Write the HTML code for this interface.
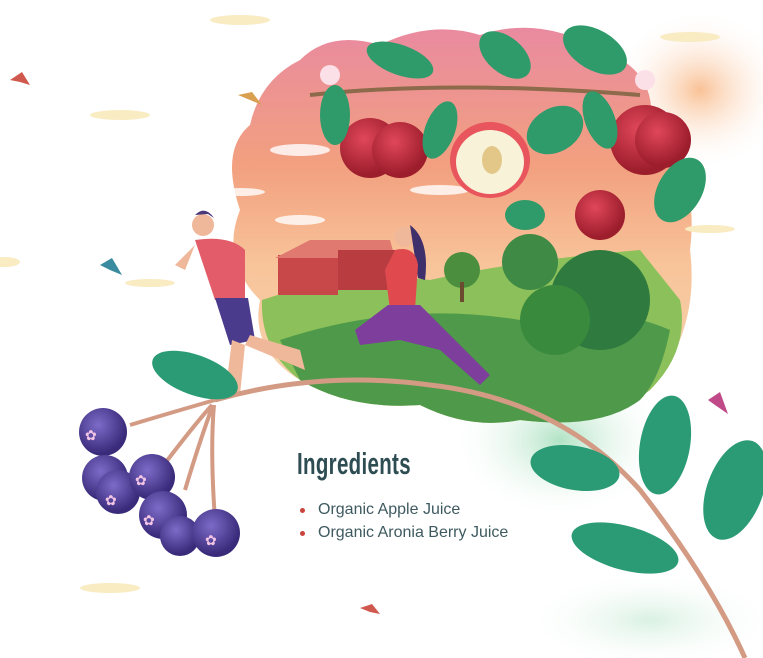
<!DOCTYPE html>
<html><head><style>
body{margin:0;width:763px;height:658px;overflow:hidden;background:#fff;font-family:"Liberation Sans",sans-serif;position:relative}
svg{position:absolute;left:0;top:0}
h2{position:absolute;left:297px;top:446px;margin:0;font-weight:bold;font-size:31px;color:#2e4d53;transform:scaleX(0.66);transform-origin:left top;letter-spacing:0.5px}
ul{position:absolute;left:300px;top:501px;margin:0;padding:0;list-style:none;font-size:16px;color:#3e5a60}
li{margin-bottom:5px;padding-left:18px;position:relative}
li:before{content:"";position:absolute;left:0;top:7px;width:5px;height:5px;border-radius:50%;background:#c9443c}
</style></head><body>
<svg width="763" height="658" viewBox="0 0 763 658">
<defs>
<linearGradient id="sky" x1="0" y1="0" x2="0" y2="1">
<stop offset="0" stop-color="#e98aa0"/><stop offset="0.35" stop-color="#f2a07f"/><stop offset="0.6" stop-color="#f8c49a"/><stop offset="1" stop-color="#f4d7b0"/></linearGradient>
<radialGradient id="glow" cx="0.5" cy="0.5" r="0.5"><stop offset="0" stop-color="#f8b27c" stop-opacity="0.8"/><stop offset="1" stop-color="#fff" stop-opacity="0"/></radialGradient>
<radialGradient id="gglow" cx="0.5" cy="0.5" r="0.5"><stop offset="0" stop-color="#9fdcb7" stop-opacity="0.8"/><stop offset="1" stop-color="#fff" stop-opacity="0"/></radialGradient>
<radialGradient id="berry" cx="0.4" cy="0.35" r="0.6"><stop offset="0" stop-color="#7d6cc8"/><stop offset="1" stop-color="#3a2a7a"/></radialGradient>
<radialGradient id="apple" cx="0.4" cy="0.35" r="0.6"><stop offset="0" stop-color="#e0475a"/><stop offset="1" stop-color="#9c1d2c"/></radialGradient>
</defs>
<ellipse cx="700" cy="90" rx="90" ry="80" fill="url(#glow)"/>
<ellipse cx="560" cy="440" rx="110" ry="80" fill="url(#gglow)"/>
<ellipse cx="650" cy="620" rx="130" ry="50" fill="url(#gglow)" opacity="0.5"/>
<path d="M300 60 Q330 30 380 45 Q430 20 480 35 Q540 15 600 50 Q660 70 650 130 Q700 170 690 250 Q700 330 650 390 Q600 430 520 420 Q470 430 420 405 Q350 410 300 380 Q250 350 260 300 Q220 260 240 210 Q220 150 250 125 Q260 80 300 60Z" fill="url(#sky)"/>
<g fill="#fff" opacity="0.8">
<ellipse cx="300" cy="150" rx="30" ry="6"/><ellipse cx="300" cy="220" rx="25" ry="5"/><ellipse cx="440" cy="190" rx="30" ry="5"/><ellipse cx="240" cy="192" rx="25" ry="4"/>
</g>
<g fill="#f9ebc2"><ellipse cx="240" cy="20" rx="30" ry="5"/><ellipse cx="120" cy="115" rx="30" ry="5"/><ellipse cx="690" cy="37" rx="30" ry="5"/><ellipse cx="5" cy="262" rx="15" ry="5"/><ellipse cx="110" cy="588" rx="30" ry="5"/><ellipse cx="150" cy="283" rx="25" ry="4"/><ellipse cx="710" cy="229" rx="25" ry="4"/></g>
<path d="M262 300 Q350 270 430 280 Q520 260 640 250 L680 300 Q690 350 650 390 Q600 430 520 420 Q470 430 420 405 Q350 410 300 380 Q260 350 262 300Z" fill="#8cc05a"/>
<path d="M280 340 Q400 300 520 320 Q600 300 670 330 Q660 380 640 400 Q600 430 520 420 Q470 430 420 405 Q350 410 300 380Z" fill="#4f9a4a"/>
<rect x="278" y="255" width="60" height="40" fill="#c8484a"/><path d="M275 258 L310 240 L390 240 L395 258Z" fill="#e07a70"/><rect x="338" y="250" width="60" height="40" fill="#b83c40"/>
<circle cx="462" cy="270" r="18" fill="#4a8e3e"/><rect x="460" y="282" width="4" height="20" fill="#6b4a30"/>
<circle cx="530" cy="262" r="28" fill="#3f8a44"/><circle cx="600" cy="300" r="50" fill="#2f7a3e"/><circle cx="555" cy="320" r="35" fill="#3a8a3e"/>
<circle cx="203" cy="225" r="11" fill="#f0b89a"/><path d="M195 215 Q205 205 214 218 L208 214Z" fill="#4b3a7a"/>
<path d="M195 240 Q230 235 245 250 L245 300 L215 300Z" fill="#e25c6a"/>
<path d="M215 298 L248 298 L255 340 L230 345 Z" fill="#4b3b8c"/>
<path d="M232 340 L225 395 L240 395 L245 345Z M250 335 L300 350 L305 370 L245 345Z" fill="#f0b89a"/>
<path d="M195 245 L175 265 L185 270Z" fill="#f0b89a"/>
<circle cx="405" cy="237" r="10" fill="#f0b89a"/><path d="M410 225 Q430 240 425 280 L418 278 Z" fill="#3f2f6a"/>
<path d="M395 250 Q415 245 418 265 L415 310 L390 310 L385 270Z" fill="#e04a4e"/>
<path d="M388 305 L420 305 L470 355 L490 375 L480 385 L440 350 L400 340 L360 345 L355 330 Z" fill="#7d3e9c"/>
<path d="M310 95 Q450 80 640 95" stroke="#8c6a4a" stroke-width="4" fill="none"/>
<circle cx="370" cy="148" r="30" fill="url(#apple)"/><circle cx="400" cy="150" r="28" fill="url(#apple)"/>
<ellipse cx="490" cy="160" rx="40" ry="38" fill="#e8555c"/><ellipse cx="490" cy="162" rx="34" ry="32" fill="#f8f2d8"/><ellipse cx="492" cy="160" rx="10" ry="14" fill="#e2c788"/>
<circle cx="645" cy="140" r="35" fill="url(#apple)"/><circle cx="663" cy="140" r="28" fill="url(#apple)"/>
<circle cx="600" cy="215" r="25" fill="url(#apple)"/>
<g fill="#2f9a6a">
<ellipse cx="400" cy="60" rx="35" ry="15" transform="rotate(20 400 60)"/>
<ellipse cx="505" cy="55" rx="30" ry="18" transform="rotate(40 505 55)"/>
<ellipse cx="595" cy="50" rx="35" ry="20" transform="rotate(30 595 50)"/>
<ellipse cx="335" cy="115" rx="15" ry="30"/>
<ellipse cx="555" cy="130" rx="30" ry="22" transform="rotate(-30 555 130)"/>
<ellipse cx="680" cy="190" rx="22" ry="35" transform="rotate(30 680 190)"/>
<ellipse cx="440" cy="130" rx="15" ry="30" transform="rotate(20 440 130)"/>
<ellipse cx="600" cy="120" rx="15" ry="30" transform="rotate(-20 600 120)"/>
<ellipse cx="525" cy="215" rx="20" ry="15"/>
</g>
<g fill="#fbe0e8"><circle cx="330" cy="75" r="10"/><circle cx="645" cy="80" r="10"/></g>
<path d="M215 400 Q320 370 430 385 Q560 400 640 490 Q710 580 745 658" stroke="#d39a84" stroke-width="5" fill="none"/>
<path d="M215 400 Q180 410 130 425 M212 405 Q190 430 160 470 M213 405 Q200 440 185 490 M214 405 Q210 450 215 520" stroke="#d39a84" stroke-width="4" fill="none"/>
<g fill="#2a9b74">
<ellipse cx="195" cy="375" rx="45" ry="20" transform="rotate(20 195 375)"/>
<ellipse cx="665" cy="445" rx="25" ry="50" transform="rotate(10 665 445)"/>
<ellipse cx="575" cy="468" rx="45" ry="22" transform="rotate(10 575 468)"/>
<ellipse cx="735" cy="490" rx="28" ry="52" transform="rotate(20 735 490)"/>
<ellipse cx="625" cy="548" rx="55" ry="22" transform="rotate(15 625 548)"/>
</g>
<g fill="url(#berry)">
<circle cx="103" cy="432" r="24"/><circle cx="105" cy="478" r="23"/><circle cx="118" cy="492" r="22"/><circle cx="152" cy="477" r="23"/><circle cx="163" cy="515" r="24"/><circle cx="180" cy="536" r="20"/><circle cx="216" cy="533" r="24"/>
</g>
<g fill="#f4c6e6" font-size="14" font-family="DejaVu Sans"><text x="85" y="440">✿</text><text x="105" y="505">✿</text><text x="135" y="485">✿</text><text x="143" y="525">✿</text><text x="205" y="545">✿</text></g>
<g fill="#d0594f"><path d="M10 80 L22 72 L30 85 L20 82Z"/><path d="M360 608 L372 604 L380 614 L370 612Z"/><path d="M708 400 L720 392 L728 414 L715 405Z" fill="#c04a88"/></g>
<g fill="#d8a050"><path d="M238 95 L252 92 L262 105 L250 100Z"/></g>
<g fill="#3a8aa0"><path d="M100 265 L112 258 L122 275 L110 270Z"/></g>
</svg>
<h2>Ingredients</h2>
<ul><li>Organic Apple Juice</li><li>Organic Aronia Berry Juice</li></ul>
</body></html>
